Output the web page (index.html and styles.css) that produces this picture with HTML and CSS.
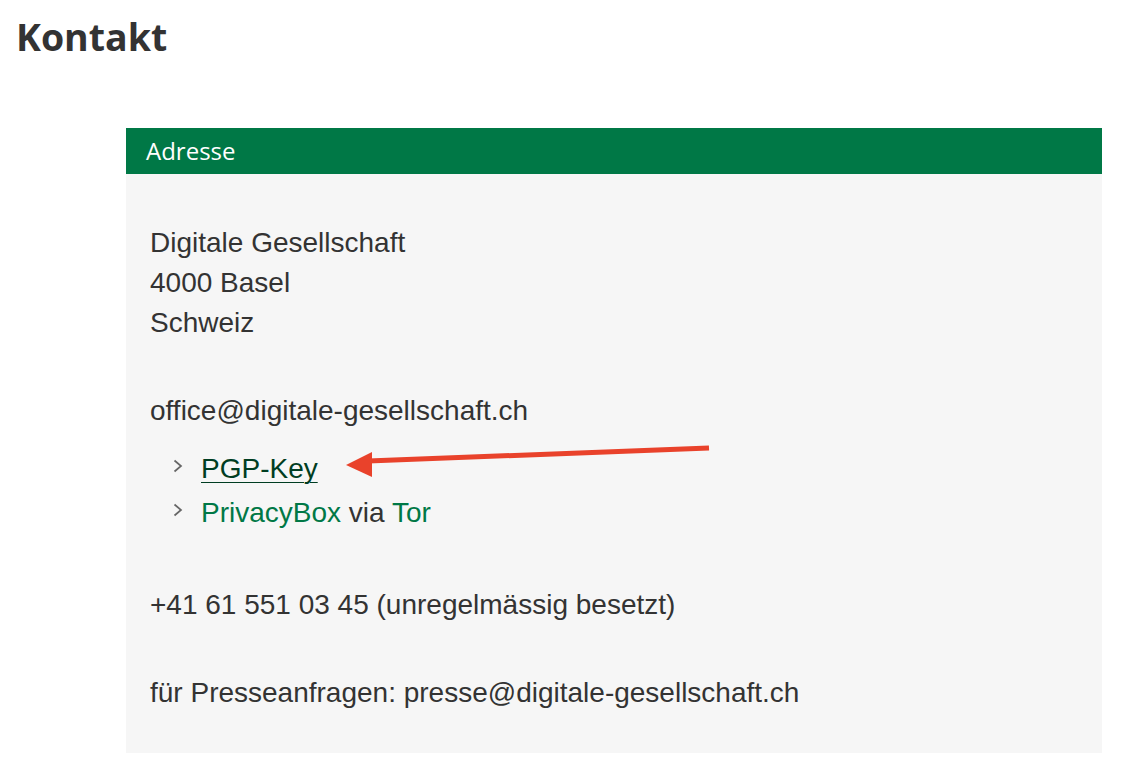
FILE: index.html
```html
<!DOCTYPE html>
<html lang="de">
  <head>
    <meta charset="UTF-8" />
    <title>Kontakt</title>
    <link rel="stylesheet" href="styles.css">
  </head>
  <body>
    <h1 class="page-title">Kontakt</h1>

    <div class="panel">
      <div class="panel-heading">Adresse</div>
      <div class="panel-body">
        <p class="block">
          Digitale Gesellschaft<br>
          4000 Basel<br>
          Schweiz
        </p>

        <p class="mail">office@digitale-gesellschaft.ch</p>

        <ul class="links">
          <li>
            <svg class="chevron" viewBox="0 0 10 14"><polyline points="1.5,1.5 8,7 1.5,12.5" /></svg><a class="link hover" href="#">PGP-Key</a>
          </li>
          <li>
            <svg class="chevron" viewBox="0 0 10 14"><polyline points="1.5,1.5 8,7 1.5,12.5" /></svg><a class="link" href="#">PrivacyBox</a> via <a class="link" href="#">Tor</a>
          </li>
        </ul>

        <p class="block">+41 61 551 03 45 (unregelmässig besetzt)</p>

        <p class="last">für Presseanfragen: presse@digitale-gesellschaft.ch</p>
      </div>
    </div>

    <!-- annotation arrow drawn over the page -->
    <svg class="annotation" viewBox="0 0 1124 780">
      <line x1="709" y1="448" x2="368" y2="461" stroke="#e9422b" stroke-width="5" />
      <polygon points="346,465 372,452 372,477" fill="#e9422b" />
    </svg>
  </body>
</html>
```

FILE: styles.css
```css
body {
  margin: 0;
  background-color: #ffffff;
  color: #333333;
  position: relative;
  min-height: 780px;
}

.page-title {
  margin: 13px 0 0 16px;
  font-family: "Open Sans", sans-serif;
  font-weight: 700;
  font-size: 37.5px;
  line-height: 48px;
  color: #333333;
}

.panel {
  margin: 67px 0 0 126px;
  width: 976px;
}

.panel-heading {
  background-color: #007846;
  color: white;
  font-family: "Open Sans", sans-serif;
  font-size: 24px;
  line-height: 46px;
  height: 46px;
  padding: 0 20px;
}

.panel-body {
  background-color: #f6f6f6;
  padding: 49px 24px 40px;
  font-family: "Liberation Sans", Arial, sans-serif;
  font-size: 28px;
  line-height: 40px;
}

.panel-body p {
  margin: 0;
}

.panel-body .block {
  margin-bottom: 48px;
}

.links {
  list-style: none;
  margin: 16px 0 50px;
  padding: 0 0 0 23px;
}

.links li {
  line-height: 44px;
}

.chevron {
  width: 10px;
  height: 14px;
  margin-right: 18px;
  vertical-align: 5px;
  fill: none;
  stroke: #666666;
  stroke-width: 1.7;
}

.link {
  color: #007846;
  text-decoration: none;
}

.link.hover {
  color: #003d22;
  text-decoration: underline;
  text-decoration-thickness: 1px;
  text-underline-offset: 4px;
}

.annotation {
  position: absolute;
  left: 0;
  top: 0;
  width: 1124px;
  height: 780px;
  pointer-events: none;
}
```
